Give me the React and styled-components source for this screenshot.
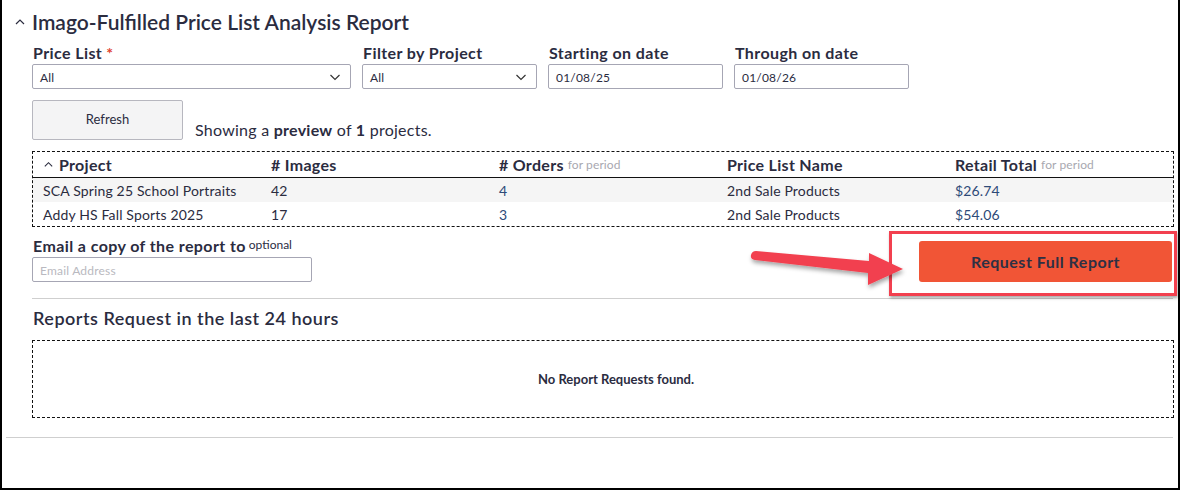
import React from 'react'
import styled, { createGlobalStyle } from 'styled-components'

const GlobalStyle = createGlobalStyle`
    html, body {
        margin: 0;
        padding: 0;
        background: #fff;
    }
    * {
        box-sizing: border-box;
    }
`

const Frame = styled.div`
    width: 1180px;
    height: 490px;
    border: 2px solid #000;
    border-top: none;
    padding: 0 5px 0 4px;
    font-family: Lato, "Open Sans", sans-serif;
    color: #2b2c3f;
    position: relative;
`

const Panel = styled.section`
    border-bottom: 1px solid #cfcfcf;
    padding-bottom: 19px;
`

const TitleRow = styled.div`
    display: flex;
    align-items: center;
    gap: 6px;
    padding: 10px 0 0 8px;
    height: 34px;

    h2 {
        margin: 0;
        font-size: 21px;
        font-weight: 600;
        line-height: 24px;
    }
`

const Body = styled.div`
    padding-left: 26px;
`

const FilterRow = styled.div`
    display: flex;
    gap: 11px;
    margin-top: 9px;
`

const Field = styled.div`
    display: flex;
    flex-direction: column;
    width: ${p => p.$w}px;
`

const Label = styled.label`
    font-size: 16px;
    font-weight: 700;
    line-height: 19px;
    letter-spacing: 0.4px;
    margin: 0 0 2px 1px;
    white-space: nowrap;

    span {
        color: #e0432f;
        margin-left: 4px;
    }
    small {
        font-size: 12px;
        font-weight: 400;
        letter-spacing: 0;
        margin-left: 3px;
        vertical-align: 3px;
    }
`

const Box = styled.div`
    height: 25px;
    border: 1px solid #a6a6b4;
    border-radius: 2px;
    display: flex;
    align-items: center;
    justify-content: space-between;
    padding: 1px 9px 0 7px;
    font-size: 12px;
    letter-spacing: 0.2px;
    color: ${p => (p.$placeholder ? '#b9b9c0' : '#2b2c3f')};
    background: #fff;
`

const RefreshRow = styled.div`
    display: flex;
    align-items: flex-end;
    gap: 12px;
    margin-top: 11px;
`

const Button = styled.button`
    width: 151px;
    height: 40px;
    border: 1px solid #b7b7bf;
    border-radius: 2px;
    background: #f4f4f5;
    font-family: inherit;
    font-size: 13px;
    color: #2b2c3f;
    padding: 0 0 3px;
`

const Preview = styled.div`
    font-size: 16px;
    letter-spacing: 0.25px;
    line-height: 20px;

    b {
        font-weight: 700;
    }
`

const Table = styled.div`
    margin-top: 11px;
    border: 1px dashed #111;
    width: 1142px;
`

const Row = styled.div`
    display: grid;
    grid-template-columns: repeat(5, 228px);
    height: ${p => (p.$head ? 26 : 24)}px;
    align-items: center;
    padding-left: 10px;
    background: ${p => (p.$shade ? '#f5f5f5' : '#fff')};
    border-bottom: ${p => (p.$head ? '1px solid #111' : 'none')};
`

const Head = styled.div`
    font-size: 16px;
    font-weight: 700;
    letter-spacing: 0.3px;
    display: flex;
    align-items: center;
    gap: 5px;
    white-space: nowrap;

    small {
        font-size: 12px;
        font-weight: 400;
        letter-spacing: 0.1px;
        color: #a8a8b0;
        margin-left: -1px;
    }
`

const Cell = styled.div`
    font-size: 14px;
    letter-spacing: 0.15px;
    color: ${p => (p.$blue ? '#2d4a78' : '#2b2c3f')};
`

const EmailRow = styled.div`
    display: flex;
    justify-content: space-between;
    align-items: flex-start;
    margin-top: 8px;
`

const Primary = styled.button`
    width: 253px;
    height: 41px;
    margin: 6px 1px 0 0;
    border: none;
    border-radius: 3px;
    background: #f15536;
    color: #2d3044;
    font-family: inherit;
    font-size: 16px;
    font-weight: 700;
    letter-spacing: 0.5px;
`

const Divider = styled.hr`
    border: none;
    border-top: 1px solid #cfcfcf;
    margin: 16px 0 0;
    width: 1141px;
`

const SubTitle = styled.h3`
    margin: 8px 0 0 1px;
    font-size: 18px;
    font-weight: 600;
    letter-spacing: 0.5px;
    line-height: 22px;
`

const Empty = styled.div`
    margin-top: 11px;
    width: 1142px;
    height: 78px;
    border: 1px dashed #111;
    display: flex;
    align-items: center;
    justify-content: center;
    padding-left: 26px;
    font-size: 13px;
    font-weight: 700;
`

const Highlight = styled.div`
    position: absolute;
    left: 887px;
    top: 231px;
    width: 288px;
    height: 65px;
    border: 3px solid #f2404f;
    box-shadow: 1px 2px 3px rgba(0, 0, 0, 0.35);
    pointer-events: none;
`

const Arrow = styled.svg`
    position: absolute;
    left: 743px;
    top: 239px;
    overflow: visible;
    pointer-events: none;
`

const ChevronUp = ({ size = 12 }) => (
    <svg width={size} height={size} viewBox="0 0 12 12" fill="none" stroke="#2b2c3f" strokeWidth="1.2">
        <path d="M2 8 L6 4 L10 8" />
    </svg>
)

const ChevronDown = () => (
    <svg width="12" height="12" viewBox="0 0 12 12" fill="none" stroke="#333" strokeWidth="1.2">
        <path d="M1.5 4 L6 8.5 L10.5 4" />
    </svg>
)

const rows = [
    ['SCA Spring 25 School Portraits', '42', '4', '2nd Sale Products', '$26.74'],
    ['Addy HS Fall Sports 2025', '17', '3', '2nd Sale Products', '$54.06'],
]

export default function App() {
    return (
        <>
            <GlobalStyle />
            <Frame>
                <Panel>
                    <TitleRow>
                        <ChevronUp />
                        <h2>Imago-Fulfilled Price List Analysis Report</h2>
                    </TitleRow>
                    <Body>
                        <FilterRow>
                            <Field $w={319}>
                                <Label>Price List<span>*</span></Label>
                                <Box>All<ChevronDown /></Box>
                            </Field>
                            <Field $w={175}>
                                <Label>Filter by Project</Label>
                                <Box>All<ChevronDown /></Box>
                            </Field>
                            <Field $w={175}>
                                <Label>Starting on date</Label>
                                <Box>01/08/25</Box>
                            </Field>
                            <Field $w={175}>
                                <Label>Through on date</Label>
                                <Box>01/08/26</Box>
                            </Field>
                        </FilterRow>

                        <RefreshRow>
                            <Button>Refresh</Button>
                            <Preview>Showing a <b>preview</b> of <b>1</b> projects.</Preview>
                        </RefreshRow>

                        <Table>
                            <Row $head>
                                <Head><ChevronUp size={11} />Project</Head>
                                <Head># Images</Head>
                                <Head># Orders <small>for period</small></Head>
                                <Head>Price List Name</Head>
                                <Head>Retail Total <small>for period</small></Head>
                            </Row>
                            {rows.map((r, i) => (
                                <Row key={r[0]} $shade={i === 0}>
                                    <Cell>{r[0]}</Cell>
                                    <Cell>{r[1]}</Cell>
                                    <Cell $blue>{r[2]}</Cell>
                                    <Cell>{r[3]}</Cell>
                                    <Cell $blue>{r[4]}</Cell>
                                </Row>
                            ))}
                        </Table>

                        <EmailRow>
                            <Field $w={280}>
                                <Label>Email a copy of the report to<small>optional</small></Label>
                                <Box $placeholder>Email Address</Box>
                            </Field>
                            <Primary>Request Full Report</Primary>
                        </EmailRow>

                        <Divider />
                        <SubTitle>Reports Request in the last 24 hours</SubTitle>
                        <Empty>No Report Requests found.</Empty>
                    </Body>
                </Panel>

                <Highlight />
                <Arrow width="170" height="50">
                    <defs>
                        <filter id="sh" x="-20%" y="-50%" width="140%" height="200%">
                            <feDropShadow dx="1" dy="3" stdDeviation="2" floodColor="#000" floodOpacity="0.35" />
                        </filter>
                    </defs>
                    <g filter="url(#sh)" fill="#f2404f">
                        <path d="M11 12 L124 22 L124 14 L158 30 L123 46 L123 34 L10 21 Q5 20 6 16 Q7 12 11 12 Z" />
                    </g>
                </Arrow>
            </Frame>
        </>
    )
}
